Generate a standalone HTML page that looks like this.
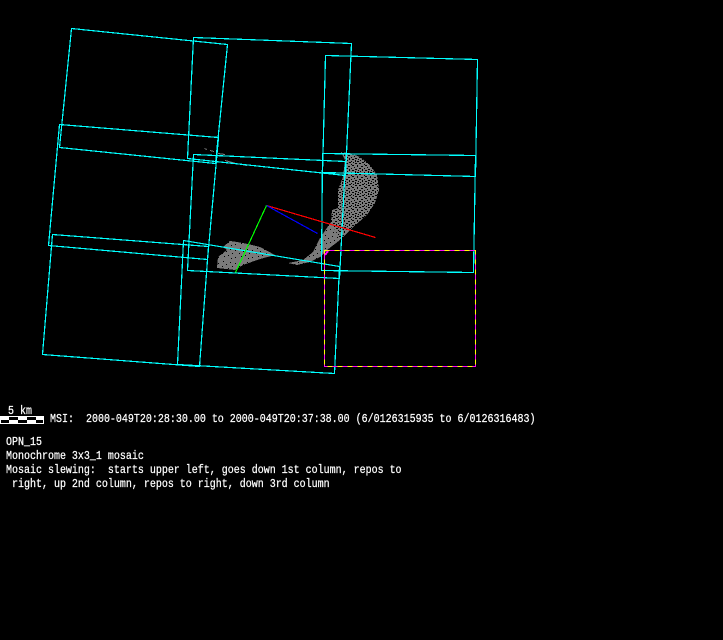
<!DOCTYPE html>
<html><head><meta charset="utf-8"><style>
html,body{margin:0;padding:0;background:#000;width:723px;height:640px;overflow:hidden}
svg{display:block}
text{font-family:"Liberation Mono",monospace;font-size:12px;fill:#fff;stroke:#fff;stroke-width:.25px;white-space:pre}
</style></head><body>
<svg width="723" height="640" viewBox="0 0 723 640" xmlns="http://www.w3.org/2000/svg">
<defs>
<pattern id="d" width="13" height="11" patternUnits="userSpaceOnUse">
<rect width="13" height="11" fill="#7a7a7a"/>
<path fill="#000" shape-rendering="crispEdges" d="M1 0h2v1H1zM6 0h1v2H6zM10 1h2v1h-2zM3 2h1v1H3zM0 3h1v1H0zM8 3h2v1H8zM4 4h2v1H4zM11 4h1v2h-1zM1 5h2v1H1zM7 5h1v1H7zM9 6h1v1H9zM4 6h1v2H4zM0 7h1v1H0zM6 7h2v1H6zM11 8h2v1h-2zM2 8h1v1H2zM8 9h2v1H8zM4 9h2v1H4zM0 10h1v1H0z"/>
</pattern>
<pattern id="e" width="17" height="13" patternUnits="userSpaceOnUse">
<rect width="17" height="13" fill="#7a7a7a"/>
<path fill="#000" shape-rendering="crispEdges" d="M2 1h1v1H2zM9 2h1v1H9zM14 3h1v1h-1zM5 4h1v1H5zM1 6h1v1H1zM11 6h1v1h-1zM7 8h1v1H7zM3 9h1v1H3zM14 10h1v1h-1zM10 11h1v1h-1z"/>
</pattern>
</defs>
<g shape-rendering="crispEdges">
<path fill="url(#d)" d="M341 152L350 153L360 157L370 165L377 175L379 190L375 203L367 215L353 227L340 240L333 243L326 238L331 222L332 210L338 208L338 190L343 177L345 160Z"/>
<path fill="url(#e)" d="M340 240L327 250L320 257L310 262L297 265L288 263L303 260L313 252L320 238L331 222L336 232Z"/>
<path fill="url(#e)" d="M230 241L223 247L227 250L218 257L217 268L235 270L243 265L260 259L275 255L260 247L248 244L237 242Z"/>
<path fill="none" stroke="#7a7a7a" d="M204.500 148.500L207 149.500M210 150.500L214 151.500M218 153.500L225 154.500M225 160.500L236 163.500L247 165.500"/>
<g fill="none" stroke="#0ff" stroke-width="1.2">
<polygon points="71.500,28.500 227.500,44.500 215.500,163.500 59.500,147.500"/>
<polygon points="59.500,124.500 218.500,137.500 207.500,259.500 48.500,245.500"/>
<polygon points="52.500,234.500 208.500,246.500 199.500,366.500 42.500,354.500"/>
<polygon points="193.500,37.500 351.500,43.500 345.500,175.500 187.500,158.500"/>
<polygon points="193.500,154.500 345.500,161.500 339.500,278.500 187.500,270.500"/>
<polygon points="183.500,240.500 339.500,266.500 334.500,373.500 177.500,364.500"/>
<polygon points="325.500,55.500 477.500,59.500 475.500,176.500 322.500,172.500"/>
<polygon points="322.500,153.500 475.500,155.500 473.500,272.500 321.500,270.500"/>
</g>
<path fill="none" stroke="#f00" stroke-width="1.2" d="M266.500 205.500L375.500 237.500"/>
<path fill="none" stroke="#00f" stroke-width="1.2" d="M266.500 205.500L317.500 233.500"/>
<path fill="none" stroke="#0f0" stroke-width="1.2" d="M266.500 205.500L235.500 272.500"/>
<rect x="324.500" y="250.500" width="151" height="116" fill="none" stroke="#f0f"/>
<rect x="324.500" y="250.500" width="151" height="116" fill="none" stroke="#ff0" stroke-dasharray="5 5"/>
<path fill="none" stroke="#f0f" stroke-width="2" d="M325 255L328 251"/>
<rect x="0" y="416" width="44" height="8" fill="#fff"/>
<path fill="#000" d="M9 417h9v3H9zM27 417h9v3h-9zM1 420h8v3H1zM18 420h9v3h-9zM36 420h7v3h-7z"/>
</g>
<text transform="translate(8,414) scale(.8333,1)">5 km</text>
<text transform="translate(50,422) scale(.8333,1)">MSI:  2000-049T20:28:30.00 to 2000-049T20:37:38.00 (6/0126315935 to 6/0126316483)</text>
<text transform="translate(6,445) scale(.8333,1)">OPN_15</text>
<text transform="translate(6,459) scale(.8333,1)">Monochrome 3x3_1 mosaic</text>
<text transform="translate(6,473) scale(.8333,1)">Mosaic slewing:  starts upper left, goes down 1st column, repos to</text>
<text transform="translate(6,487) scale(.8333,1)"> right, up 2nd column, repos to right, down 3rd column</text>
</svg>
</body></html>
